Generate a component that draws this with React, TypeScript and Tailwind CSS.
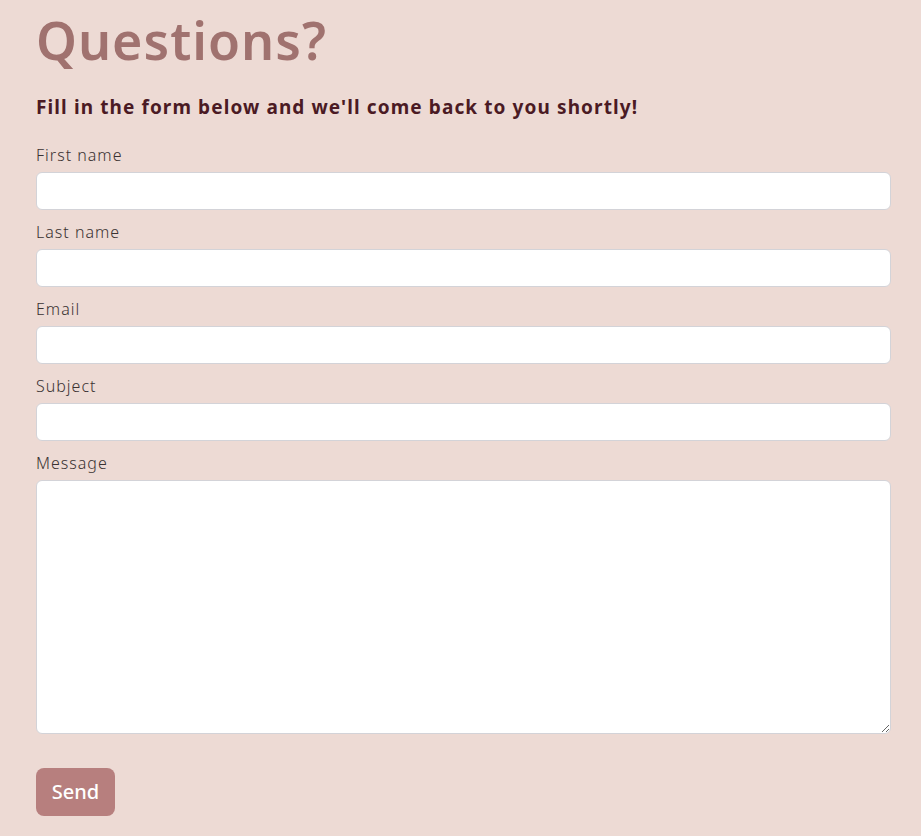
import React from "react";

const fields = ["First name", "Last name", "Email", "Subject"];

export default function App() {
  return (
    <div className="min-h-[836px] w-full bg-[#eddad4] font-['Noto_Sans',sans-serif]">
      <div className="pl-[36px] pr-[30px] pt-[2px]">
        <h1 className="text-[52px] leading-[76px] font-semibold tracking-[1px] text-[#a0726f]">Questions?</h1>
        <p className="mt-[16px] text-[19px] leading-[26px] font-bold tracking-[1.1px] text-[#4b1a24]">
          Fill in the form below and we'll come back to you shortly!
        </p>
        <form className="mt-[23px]" onSubmit={(e) => e.preventDefault()}>
          {fields.map((f) => (
            <div key={f} className="mb-[10px]">
              <label className="block mb-[5px] text-[16px] leading-[24px] font-light tracking-[1px] text-[#3a3232]">{f}</label>
              <input type="text" className="block w-full h-[38px] rounded-[6px] border border-[#d3d3d8] bg-white px-3 outline-none" />
            </div>
          ))}
          <div>
            <label className="block mb-[5px] text-[16px] leading-[24px] font-light tracking-[1px] text-[#3a3232]">Message</label>
            <textarea className="block w-full h-[254px] rounded-[6px] border border-[#d3d3d8] bg-white px-3 py-2 outline-none resize-y" />
          </div>
          <button type="submit" className="mt-[34px] h-[48px] w-[79px] rounded-[8px] bg-[#b77f7e] text-[20px] text-white font-medium">
            Send
          </button>
        </form>
      </div>
    </div>
  );
}
